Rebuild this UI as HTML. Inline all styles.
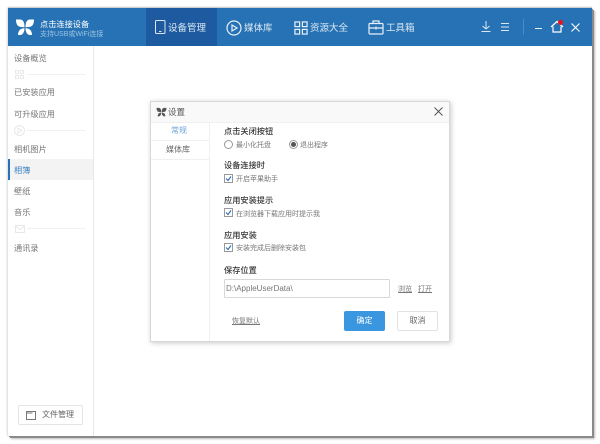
<!DOCTYPE html>
<html>
<head>
<meta charset="utf-8">
<style>
html,body{margin:0;padding:0;width:600px;height:444px;background:#fff;overflow:hidden}
body{font-family:"Liberation Sans","Noto Sans CJK SC",sans-serif;position:relative}
#p{position:absolute;left:0;top:0;width:600px;height:444px;filter:blur(.3px)}
.a{position:absolute;white-space:nowrap}
.win{position:absolute;left:8px;top:8px;width:584px;height:428px;background:#fff;box-shadow:1px 1px 0 #8a8a8a,2px 2px 0 #8a8a8a,3px 3px 2px #bbb,-1px 0 2px #ddd,0 -1px 1px #bbb}
.head{position:absolute;left:8px;top:8px;width:584px;height:38px;background:#2672b4}
.tab{position:absolute;left:146px;top:8px;width:71px;height:38px;background:#1d5a9f}
.nav{color:#dbe8f3;font-size:9.500px;line-height:14px;top:22px}
.side{color:#777;font-size:8.200px;line-height:12px;left:14px}
.sep{position:absolute;left:27px;width:59px;height:1px;background:#f1f1f1}
.dlg{position:absolute;left:150px;top:101px;width:300px;height:241px;background:#fff;border:1px solid #d8d8d8;box-sizing:border-box;box-shadow:1px 1px 5px rgba(0,0,0,.22)}
.h{color:#333;font-size:8.200px;line-height:12px;left:224px;font-weight:500}
.t{color:#777;font-size:7px;line-height:10px}
.cb{position:absolute;left:224px;width:7px;height:7px;border:1px solid #999;background:#fff}
.cb svg{position:absolute;left:0;top:0}
</style>
</head>
<body>
<div id="p">
<div class="win"></div>
<div class="head"></div>
<div class="tab"></div>

<svg class="a" style="left:15px;top:18px" width="20" height="18" viewBox="0 0 20 18" fill="#fff"><path d="M1 1.500H5C8 1.500 9.500 4 9.500 9.200 5 9.200 3 8.500 2 6.500 1.200 5 1 3.500 1 1.500Z"/><path d="M19 1.500H15C12 1.500 10.500 4 10.500 9.200 15 9.200 17 8.500 18 6.500 18.800 5 19 3.500 19 1.500Z"/><path d="M3 17C3 13 5 10.200 9.500 10.200 9.500 13.500 8 17 5 17Z"/><path d="M17 17C17 13 15 10.200 10.500 10.200 10.500 13.500 12 17 15 17Z"/></svg>
<div class="a" style="left:40px;top:19px;color:#fff;font-size:8.200px;line-height:11px">点击连接设备</div>
<div class="a" style="left:40px;top:30px;color:#9cc3e2;font-size:7px;line-height:10px">支持USB或WiFi连接</div>

<svg class="a" style="left:154px;top:20px" width="12" height="15" viewBox="0 0 12 15" fill="none" stroke="#dbe8f3"><rect x="1.500" y=".5" width="9.500" height="13" rx="1"/><path d="M5 11.500h2.500"/></svg>
<div class="a nav" style="left:168px">设备管理</div>
<svg class="a" style="left:226px;top:20px" width="16" height="16" viewBox="0 0 16 16" fill="none" stroke="#e6eff7" stroke-width="1.200"><circle cx="8" cy="8" r="7"/><path d="M6 5l5 3-5 3Z"/></svg>
<div class="a nav" style="left:244px">媒体库</div>
<svg class="a" style="left:294px;top:21px" width="14" height="14" viewBox="0 0 15 15" fill="none" stroke="#e6eff7" stroke-width="1.300"><rect x="1" y="1" width="5" height="5"/><rect x="9" y="1" width="5" height="5"/><rect x="1" y="9" width="5" height="5"/><rect x="9" y="9" width="5" height="5"/></svg>
<div class="a nav" style="left:310px">资源大全</div>
<svg class="a" style="left:368px;top:20px" width="16" height="15" viewBox="0 0 16 15" fill="none" stroke="#e6eff7" stroke-width="1.200"><rect x="1" y="3.500" width="14" height="10.500" rx="1"/><path d="M5 3.500V1h6v2.500M1 8h14M8 6.500v3M6.500 8h3"/></svg>
<div class="a nav" style="left:386px">工具箱</div>

<svg class="a" style="left:480px;top:20px" width="12" height="13" viewBox="0 0 12 13" fill="none" stroke="#dbe8f3"><path d="M6 1v8M2.500 6L6 9l3.500-3M1.500 11.500h9"/></svg>
<svg class="a" style="left:500px;top:22px" width="10" height="10" viewBox="0 0 10 10" fill="none" stroke="#dbe8f3"><path d="M1 1.500h8M1 5h8M1 8.500h8"/></svg>
<div class="a" style="left:523px;top:19px;width:1px;height:16px;background:#4a8bc2"></div>
<div class="a" style="left:535px;top:28px;width:7px;height:1px;background:#e6eff7"></div>
<svg class="a" style="left:550px;top:20px" width="14" height="13" viewBox="0 0 14 13" fill="none" stroke="#fff" stroke-width="1.200"><path d="M1 7L7 1.500 13 7M3 6.500V12h8V6.500"/></svg>
<div class="a" style="left:558px;top:20px;width:5px;height:5px;border-radius:50%;background:#e8141c"></div>
<svg class="a" style="left:571px;top:23px" width="9" height="9" viewBox="0 0 9 9" fill="none" stroke="#fff" stroke-width="1.100"><path d="M.5.500l8 8M8.500.500l-8 8"/></svg>

<div class="a" style="left:93px;top:46px;width:1px;height:390px;background:#e8e8e8"></div>
<div class="a side" style="top:53px">设备概览</div>
<svg class="a" style="left:15px;top:70px" width="9" height="9" viewBox="0 0 9 9" fill="none" stroke="#e8e8e8"><rect x=".5" y=".5" width="3" height="3"/><rect x="5.500" y=".5" width="3" height="3"/><rect x=".5" y="5.500" width="3" height="3"/><rect x="5.500" y="5.500" width="3" height="3"/></svg>
<div class="sep" style="top:74px"></div>
<div class="a side" style="top:87px">已安装应用</div>
<div class="a side" style="top:109px">可升级应用</div>
<svg class="a" style="left:14px;top:125px" width="11" height="11" viewBox="0 0 11 11" fill="none" stroke="#e8e8e8"><circle cx="5.500" cy="5.500" r="5"/><path d="M4 3l4 2.500L4 8Z"/></svg>
<div class="sep" style="top:130px"></div>
<div class="a side" style="top:144px">相机图片</div>
<div class="a" style="left:8px;top:159px;width:85px;height:21px;background:#f3f3f3"></div>
<div class="a" style="left:8px;top:159px;width:2px;height:21px;background:#2672b4"></div>
<div class="a side" style="top:165px;color:#3b82c4">相簿</div>
<div class="a side" style="top:186px">壁纸</div>
<div class="a side" style="top:207px">音乐</div>
<svg class="a" style="left:15px;top:225px" width="10" height="9" viewBox="0 0 10 9" fill="none" stroke="#e8e8e8"><rect x=".5" y=".5" width="9" height="7"/><path d="M.5 1L5 4.500 9.500 1"/></svg>
<div class="sep" style="top:228px"></div>
<div class="a side" style="top:243px">通讯录</div>

<div class="a" style="left:18px;top:405px;width:63px;height:18px;border:1px solid #e4e4e4;border-radius:2px"></div>
<svg class="a" style="left:26px;top:410px" width="10" height="10" viewBox="0 0 10 10" fill="none" stroke="#777"><path d="M.5 1.500h9v8h-9ZM.5 3h6"/></svg>
<div class="a" style="left:42px;top:409px;color:#666;font-size:8px;line-height:11px">文件管理</div>

<div class="dlg"></div>
<div class="a" style="left:151px;top:102px;width:298px;height:20px;background:#f9f9f9;border-bottom:1px solid #f0f0f0"></div>
<div class="a" style="left:209px;top:123px;width:1px;height:218px;background:#f0f0f0"></div>
<div class="a" style="left:151px;top:140px;width:58px;height:1px;background:#f0f0f0"></div>
<div class="a" style="left:151px;top:159px;width:58px;height:1px;background:#f0f0f0"></div>
<svg class="a" style="left:156px;top:107px" width="11" height="10" viewBox="0 0 20 18" fill="#555"><path d="M1 1.500H5C8 1.500 9.500 4 9.500 9.200 5 9.200 3 8.500 2 6.500 1.200 5 1 3.500 1 1.500Z"/><path d="M19 1.500H15C12 1.500 10.500 4 10.500 9.200 15 9.200 17 8.500 18 6.500 18.800 5 19 3.500 19 1.500Z"/><path d="M3 17C3 13 5 10.200 9.500 10.200 9.500 13.500 8 17 5 17Z"/><path d="M17 17C17 13 15 10.200 10.500 10.200 10.500 13.500 12 17 15 17Z"/></svg>
<div class="a" style="left:168px;top:107px;color:#555;font-size:8.500px;line-height:11px">设置</div>
<svg class="a" style="left:434px;top:107px" width="9" height="9" viewBox="0 0 9 9" fill="none" stroke="#555" stroke-width="1"><path d="M.5.500l8 8M8.500.500l-8 8"/></svg>
<div class="a" style="left:171px;top:126px;color:#6ea3d8;font-size:8px;line-height:10px">常规</div>
<div class="a" style="left:166px;top:145px;color:#666;font-size:8px;line-height:10px">媒体库</div>

<div class="a h" style="top:126px">点击关闭按钮</div>
<div class="a" style="left:224px;top:140px;width:7px;height:7px;border:1px solid #999;border-radius:50%"></div>
<div class="a t" style="left:236px;top:141px">最小化托盘</div>
<div class="a" style="left:289px;top:140px;width:7px;height:7px;border:1px solid #999;border-radius:50%"></div>
<div class="a" style="left:291px;top:142px;width:5px;height:5px;background:#555;border-radius:50%"></div>
<div class="a t" style="left:300px;top:141px">退出程序</div>

<div class="a h" style="top:160px">设备连接时</div>
<div class="cb" style="top:174px"><svg width="7" height="7" viewBox="0 0 7 7" fill="none" stroke="#2f74b8" stroke-width="1.200"><path d="M1 3.500l2 2L6 1.500"/></svg></div>
<div class="a t" style="left:236px;top:175px">开启苹果助手</div>

<div class="a h" style="top:195px">应用安装提示</div>
<div class="cb" style="top:208px"><svg width="7" height="7" viewBox="0 0 7 7" fill="none" stroke="#2f74b8" stroke-width="1.200"><path d="M1 3.500l2 2L6 1.500"/></svg></div>
<div class="a t" style="left:236px;top:210px">在浏览器下载应用时提示我</div>

<div class="a h" style="top:230px">应用安装</div>
<div class="cb" style="top:243px"><svg width="7" height="7" viewBox="0 0 7 7" fill="none" stroke="#2f74b8" stroke-width="1.200"><path d="M1 3.500l2 2L6 1.500"/></svg></div>
<div class="a t" style="left:236px;top:244px">安装完成后删除安装包</div>

<div class="a h" style="top:265px">保存位置</div>
<div class="a" style="left:224px;top:279px;width:164px;height:17px;border:1px solid #d8d8d8;border-radius:1px"></div>
<div class="a" style="left:226px;top:284px;color:#777;font-size:8px;line-height:10px">D:\AppleUserData\</div>
<div class="a t" style="left:398px;top:285px;text-decoration:underline">浏览</div>
<div class="a t" style="left:418px;top:285px;text-decoration:underline">打开</div>

<div class="a t" style="left:232px;top:317px;text-decoration:underline">恢复默认</div>
<div class="a" style="left:344px;top:311px;width:41px;height:20px;background:#3b96e0;border-radius:2px;color:#fff;font-size:8px;line-height:20px;text-align:center">确定</div>
<div class="a" style="left:397px;top:311px;width:39px;height:18px;border:1px solid #e2e2e2;border-radius:2px;color:#666;font-size:8px;line-height:18px;text-align:center">取消</div>
</div>
</body>
</html>
